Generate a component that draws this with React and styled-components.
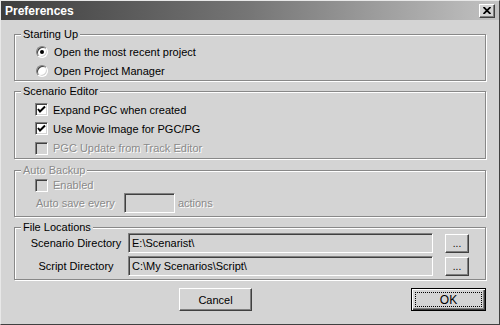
import styled, { createGlobalStyle } from "styled-components";

const GlobalStyle = createGlobalStyle`
  html, body {
    margin: 0;
    padding: 0;
    background: #d4d4d4;
  }
  body {
    font-family: "Liberation Sans", Arial, sans-serif;
    font-size: 11px;
    color: #000;
  }
`;

const Window = styled.div`
  box-sizing: border-box;
  width: 500px;
  height: 325px;
  background: #d4d4d4;
  border: 1px solid;
  border-color: #e8e8e8 #404040 #404040 #e8e8e8;
  display: flex;
  flex-direction: column;
`;

const TitleBar = styled.div`
  height: 19px;
  display: flex;
  align-items: center;
  justify-content: space-between;
  padding: 0 4px 0 4px;
  background: linear-gradient(to right, #3e3e3e 0%, #767676 50%, #c2c2c2 100%);
`;

const Title = styled.span`
  color: #fff;
  font-weight: bold;
  font-size: 12px;
`;

const CloseButton = styled.div`
  box-sizing: border-box;
  width: 16px;
  height: 14px;
  background: #d4d4d4;
  border: 1px solid;
  border-color: #fff #404040 #404040 #fff;
  box-shadow: inset -1px -1px 0 #808080;
  display: flex;
  align-items: center;
  justify-content: center;
`;

const Body = styled.div`
  padding: 14px 13px 0;
  display: flex;
  flex-direction: column;
`;

const Group = styled.div`
  position: relative;
  box-sizing: border-box;
  height: ${(p) => p.$h}px;
  margin-top: ${(p) => p.$mt || 0}px;
  border: 1px solid #888;
  box-shadow: 1px 1px 0 #fff, inset 1px 1px 0 #fff;
  padding: ${(p) => p.$pad};
  display: flex;
  flex-direction: column;
`;

const Legend = styled.span`
  position: absolute;
  top: -7px;
  left: 6px;
  padding: 0 2px;
  line-height: 13px;
  background: #d4d4d4;
  color: ${(p) => (p.$disabled ? "#8a8a8a" : "#000")};
  text-shadow: ${(p) => (p.$disabled ? "1px 1px 0 #fff" : "none")};
`;

const Row = styled.div`
  display: flex;
  align-items: center;
  height: ${(p) => p.$h}px;
  gap: ${(p) => p.$gap || 0}px;
  margin-top: ${(p) => p.$mt || 0}px;
`;

const Label = styled.span`
  color: ${(p) => (p.$disabled ? "#8a8a8a" : "#000")};
  text-shadow: ${(p) => (p.$disabled ? "1px 1px 0 #fff" : "none")};
  white-space: nowrap;
`;

const RadioCircle = styled.span`
  box-sizing: border-box;
  width: 12px;
  height: 12px;
  border-radius: 50%;
  border: 1px solid;
  border-color: #808080 #fff #fff #808080;
  box-shadow: inset 1px 1px 0 #404040, inset -1px -1px 0 #d4d4d4;
  background: #fff;
  display: flex;
  align-items: center;
  justify-content: center;
  margin-right: 6px;
  flex: none;

  &::after {
    content: "";
    width: 4px;
    height: 4px;
    border-radius: 50%;
    background: ${(p) => (p.$checked ? "#000" : "transparent")};
  }
`;

const CheckBox = styled.span`
  box-sizing: border-box;
  width: 13px;
  height: 13px;
  border: 1px solid;
  border-color: #808080 #fff #fff #808080;
  box-shadow: inset 1px 1px 0 #404040, inset -1px -1px 0 #d4d4d4;
  background: ${(p) => (p.$disabled ? "#d4d4d4" : "#fff")};
  margin-right: 5px;
  flex: none;
  display: flex;
  align-items: center;
  justify-content: center;
`;

const Sunken = styled.div`
  box-sizing: border-box;
  width: ${(p) => p.$w}px;
  height: 20px;
  border: 1px solid;
  border-color: #808080 #fff #fff #808080;
  box-shadow: inset 1px 1px 0 #404040, inset -1px -1px 0 #d4d4d4;
  background: #d4d4d4;
  padding: 2px 0 0 3px;
  white-space: nowrap;
  line-height: 14px;
  flex: none;
`;

const DirLabel = styled.span`
  width: 104px;
  text-align: center;
  flex: none;
`;

const Browse = styled.div`
  box-sizing: border-box;
  width: 24px;
  height: 19px;
  margin-left: 12px;
  border: 1px solid;
  border-color: #fff #404040 #404040 #fff;
  box-shadow: inset -1px -1px 0 #808080;
  display: flex;
  align-items: flex-end;
  justify-content: center;
  line-height: 13px;
  padding-bottom: 2px;
  font-size: 10px;
`;

const ButtonRow = styled.div`
  display: flex;
  margin-top: 8px;
  padding-left: 165px;
`;

const Button = styled.div`
  box-sizing: border-box;
  width: ${(p) => p.$w}px;
  height: 23px;
  margin-left: ${(p) => (p.$right ? "auto" : "0")};
  border: 1px solid;
  border-color: ${(p) => (p.$default ? "#000" : "#fff #404040 #404040 #fff")};
  box-shadow: ${(p) =>
    p.$default
      ? "inset 1px 1px 0 #fff, inset -1px -1px 0 #404040, inset -2px -2px 0 #808080"
      : "inset -1px -1px 0 #808080"};
  display: flex;
  align-items: center;
  justify-content: center;
  padding: 3px;
`;

const Focus = styled.div`
  flex: 1;
  align-self: stretch;
  border: 1px dotted #000;
  display: flex;
  align-items: center;
  justify-content: center;
  font-size: 12px;
`;

const Check = () => (
  <svg width="9" height="9" viewBox="0 0 9 9">
    <polyline points="1,4 3,6.5 8,1.5" fill="none" stroke="#000" strokeWidth="2" />
  </svg>
);

export default function App() {
  return (
    <>
      <GlobalStyle />
      <Window>
        <TitleBar>
          <Title>Preferences</Title>
          <CloseButton>
            <svg width="8" height="7" viewBox="0 0 8 7">
              <path d="M0.5 0 L7.5 7 M7.5 0 L0.5 7" stroke="#000" strokeWidth="1.8" />
            </svg>
          </CloseButton>
        </TitleBar>
        <Body>
          <Group $h={47} $pad="8px 0 0 21px">
            <Legend>Starting Up</Legend>
            <Row $h={19}>
              <RadioCircle $checked />
              <Label>Open the most recent project</Label>
            </Row>
            <Row $h={19}>
              <RadioCircle />
              <Label>Open Project Manager</Label>
            </Row>
          </Group>

          <Group $h={68} $mt={10} $pad="8px 0 0 20px">
            <Legend>Scenario Editor</Legend>
            <Row $h={20}>
              <CheckBox>
                <Check />
              </CheckBox>
              <Label>Expand PGC when created</Label>
            </Row>
            <Row $h={20}>
              <CheckBox>
                <Check />
              </CheckBox>
              <Label>Use Movie Image for PGC/PG</Label>
            </Row>
            <Row $h={20}>
              <CheckBox $disabled />
              <Label $disabled>PGC Update from Track Editor</Label>
            </Row>
          </Group>

          <Group $h={47} $mt={11} $pad="6px 0 0 20px">
            <Legend $disabled>Auto Backup</Legend>
            <Row $h={16}>
              <CheckBox $disabled />
              <Label $disabled>Enabled</Label>
            </Row>
            <Row $h={20}>
              <Label $disabled style={{ marginLeft: 1 }}>
                Auto save every
              </Label>
              <Sunken $w={51} style={{ marginLeft: 9 }} />
              <Label $disabled style={{ marginLeft: 3 }}>
                actions
              </Label>
            </Row>
          </Group>

          <Group $h={53} $mt={10} $pad="5px 0 0 9px">
            <Legend>File Locations</Legend>
            <Row $h={20}>
              <DirLabel>Scenario Directory</DirLabel>
              <Sunken $w={305}>E:\Scenarist\</Sunken>
              <Browse>...</Browse>
            </Row>
            <Row $h={20} $mt={3}>
              <DirLabel>Script Directory</DirLabel>
              <Sunken $w={305}>C:\My Scenarios\Script\</Sunken>
              <Browse>...</Browse>
            </Row>
          </Group>

          <ButtonRow>
            <Button $w={73}>Cancel</Button>
            <Button $w={75} $right $default>
              <Focus>OK</Focus>
            </Button>
          </ButtonRow>
        </Body>
      </Window>
    </>
  );
}
